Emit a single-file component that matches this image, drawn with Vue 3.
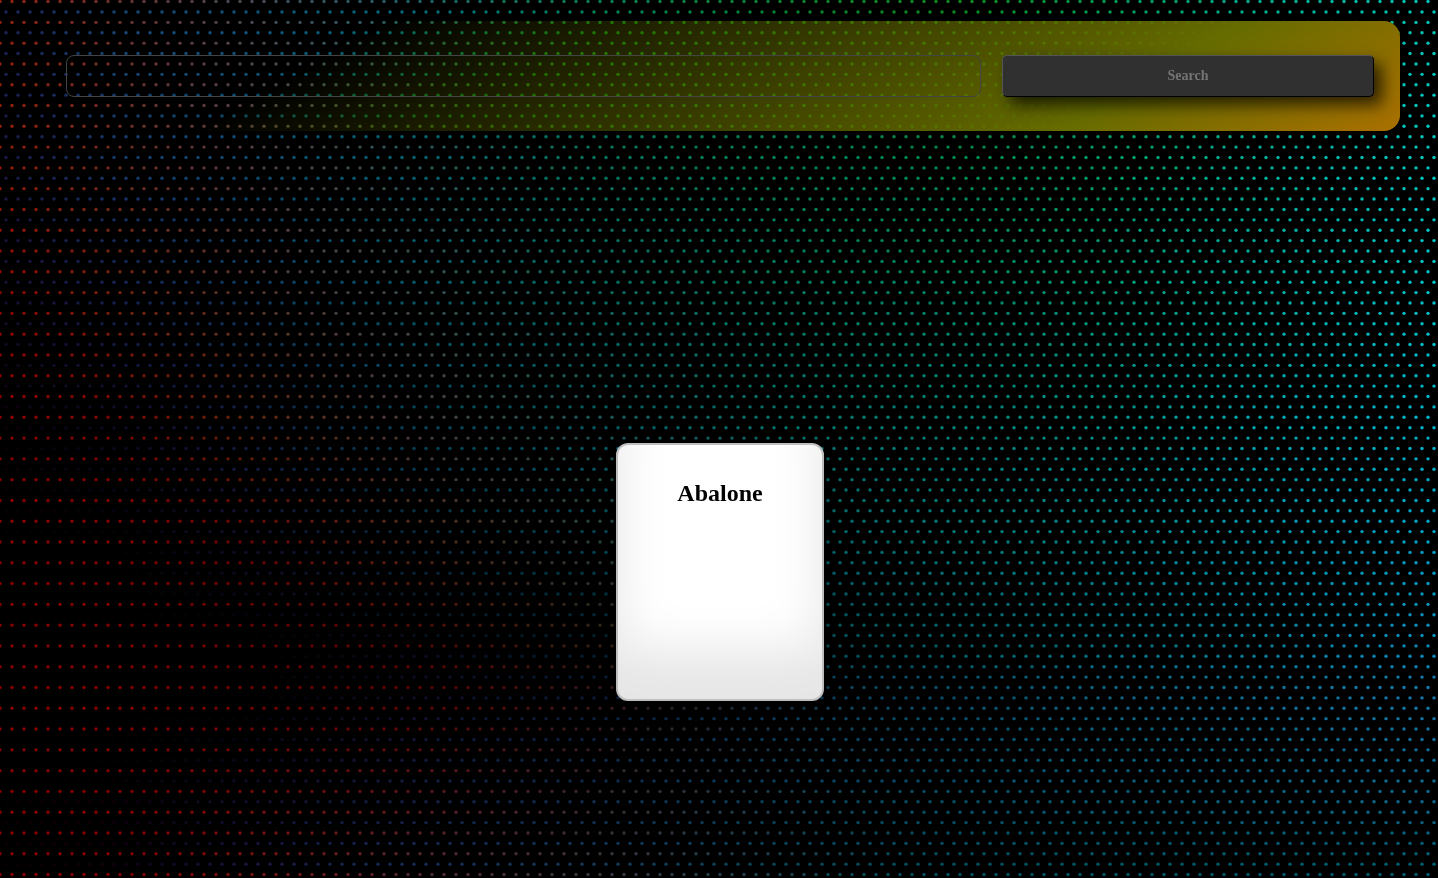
<script setup>
import { onBeforeUnmount, onMounted, ref } from 'vue'

const query = ref('')
const games = ref([{ id: 1, name: 'Abalone' }])
const field = ref(null)

const REF_W = 1438
const REF_H = 878
const STEP_X = 12
const STEP_Y = STEP_X * Math.sqrt(3)

const xs = [0, 120, 240, 400, 600, 800, 960, 1100, 1250, 1438]
const ys = [0, 150, 300, 430, 550, 640, 700, 878]

// Colours of the dot field, given on a coarse grid and blended between points.
const coolRows = [
  [[28, 35, 90], [24, 72, 120], [14, 85, 125], [0, 105, 125], [0, 128, 90], [8, 130, 45], [12, 138, 28], [0, 150, 80], [0, 170, 140], [0, 198, 185]],
  [[25, 25, 70], [24, 60, 110], [15, 75, 115], [0, 98, 115], [0, 120, 95], [0, 130, 85], [0, 138, 72], [0, 155, 100], [0, 175, 150], [0, 200, 195]],
  [[25, 10, 45], [20, 35, 85], [15, 55, 95], [5, 85, 105], [0, 108, 100], [0, 122, 98], [0, 135, 105], [0, 148, 120], [0, 170, 160], [0, 195, 205]],
  [[12, 0, 8], [15, 8, 35], [20, 30, 70], [5, 65, 90], [0, 92, 100], [0, 115, 108], [0, 130, 122], [0, 145, 138], [0, 165, 175], [0, 180, 205]],
  [[8, 0, 0], [8, 0, 4], [18, 12, 42], [8, 38, 60], [0, 68, 85], [0, 95, 105], [0, 118, 120], [0, 130, 140], [0, 145, 170], [0, 160, 200]],
  [[6, 0, 0], [5, 0, 0], [4, 0, 2], [8, 12, 25], [0, 32, 44], [0, 75, 88], [0, 98, 108], [5, 115, 132], [8, 128, 155], [12, 140, 190]],
  [[5, 0, 0], [3, 0, 0], [3, 0, 2], [16, 12, 40], [10, 28, 60], [10, 60, 95], [8, 80, 110], [10, 100, 130], [15, 112, 150], [20, 120, 175]],
  [[12, 0, 0], [20, 0, 20], [26, 22, 72], [22, 45, 92], [18, 60, 95], [8, 72, 92], [0, 80, 100], [0, 85, 105], [0, 88, 108], [0, 92, 112]],
]
const warmHeads = [
  [[150, 35, 15], [105, 50, 50], [72, 72, 85], [35, 95, 100], [5, 125, 85]],
  [[150, 30, 5], [110, 45, 35], [88, 60, 65], [45, 85, 90], [8, 118, 95]],
  [[150, 5, 0], [115, 35, 10], [88, 50, 40], [60, 72, 75], [15, 102, 97]],
  [[145, 0, 0], [125, 5, 0], [100, 35, 5], [75, 58, 55], [30, 85, 85]],
  [[140, 0, 0], [130, 0, 0], [105, 0, 0], [85, 35, 15], [40, 60, 55], [0, 92, 100]],
  [[140, 0, 0], [132, 0, 0], [108, 0, 0], [88, 8, 0], [50, 32, 18], [10, 72, 80]],
  [[140, 0, 0], [135, 0, 0], [115, 0, 0], [98, 0, 0], [54, 22, 22], [22, 56, 76]],
  [[140, 0, 0], [130, 0, 0], [120, 20, 15], [85, 40, 48], [55, 56, 68], [22, 68, 80]],
]
const warmRows = warmHeads.map((head, i) => [...head, ...coolRows[i].slice(head.length)])

function locate(stops, value) {
  let i = 0
  while (i < stops.length - 2 && value > stops[i + 1]) i++
  const t = (value - stops[i]) / (stops[i + 1] - stops[i])
  return [i, Math.min(1, Math.max(0, t))]
}

function colorAt(rows, x, y) {
  const [i, tx] = locate(xs, x)
  const [j, ty] = locate(ys, y)
  const mix = [0, 1, 2].map((c) => {
    const top = rows[j][i][c] * (1 - tx) + rows[j][i + 1][c] * tx
    const bottom = rows[j + 1][i][c] * (1 - tx) + rows[j + 1][i + 1][c] * tx
    return Math.round(top * (1 - ty) + bottom * ty)
  })
  return `rgb(${mix.join(',')})`
}

function draw() {
  const canvas = field.value
  const w = (canvas.width = window.innerWidth)
  const h = (canvas.height = window.innerHeight)
  const ctx = canvas.getContext('2d')
  for (let row = 0; row * STEP_Y / 2 < h + 4; row++) {
    const warm = row % 2 === 0
    const y = 1.6 + (row * STEP_Y) / 2
    for (let x = warm ? 0 : STEP_X / 2; x < w + 4; x += STEP_X) {
      ctx.fillStyle = colorAt(warm ? warmRows : coolRows, (x / w) * REF_W, (y / h) * REF_H)
      ctx.beginPath()
      ctx.arc(x, y, 1.7, 0, Math.PI * 2)
      ctx.fill()
    }
  }
}

onMounted(() => {
  draw()
  window.addEventListener('resize', draw)
})
onBeforeUnmount(() => window.removeEventListener('resize', draw))
</script>

<template>
  <div class="page">
    <canvas ref="field" class="dots" aria-hidden="true"></canvas>
    <header class="bar">
      <form class="search" role="search" @submit.prevent>
        <input v-model="query" class="query" type="text" aria-label="Search games" />
        <button class="submit" type="submit">Search</button>
      </form>
    </header>
    <main class="games">
      <article v-for="game in games" :key="game.id" class="card">
        <h2 class="name">{{ game.name }}</h2>
      </article>
    </main>
  </div>
</template>

<style>
body {
  margin: 0;
  background: #000;
}
</style>

<style scoped>
.page {
  box-sizing: border-box;
  min-height: 100vh;
  padding: 21px 38px 40px 40px;
  font-family: "Liberation Serif", "Times New Roman", serif;
}

.dots {
  position: fixed;
  inset: 0;
}

.bar {
  position: relative;
  padding: 34px 26px;
  border-radius: 16px;
  background: linear-gradient(150deg, rgba(102, 108, 0, 0) 22%, rgb(102, 108, 0) 78%, rgb(170, 112, 0) 100%);
}

.bar::before {
  content: "";
  position: absolute;
  inset: 0;
  border-radius: inherit;
  background: linear-gradient(150deg, #fff 21%, #ff0 38%);
  mix-blend-mode: multiply;
}

.search {
  position: relative;
  display: grid;
  grid-template-columns: 915fr 372fr;
  gap: 21px;
}

.query {
  box-sizing: border-box;
  width: 100%;
  height: 42px;
  padding: 0 12px;
  border: 1px solid #444;
  border-radius: 8px;
  background: transparent;
  color: #ccc;
  font: 14px "Liberation Serif", serif;
}

.submit {
  box-sizing: border-box;
  height: 42px;
  padding: 0;
  border: 1px solid;
  border-color: #555 #000 #000 #555;
  border-radius: 5px;
  background: #303030;
  box-shadow: 8px 8px 16px rgba(0, 0, 0, 0.7);
  color: #757575;
  font: bold 14px "Liberation Serif", serif;
}

.games {
  position: relative;
  display: flex;
  flex-wrap: wrap;
  justify-content: center;
  gap: 32px;
  margin-top: 314px;
}

.card {
  box-sizing: border-box;
  width: 204px;
  height: 254px;
  padding: 34px 16px;
  border-radius: 10px;
  background: #fff;
  box-shadow:
    inset 0 -48px 52px rgba(0, 0, 0, 0.1),
    0 0 0 2px rgb(190, 190, 190),
    5px 5px 16px rgba(0, 0, 0, 0.3);
}

.name {
  margin: 0;
  color: #000;
  font-size: 24px;
  font-weight: bold;
  line-height: 28px;
  text-align: center;
}
</style>
